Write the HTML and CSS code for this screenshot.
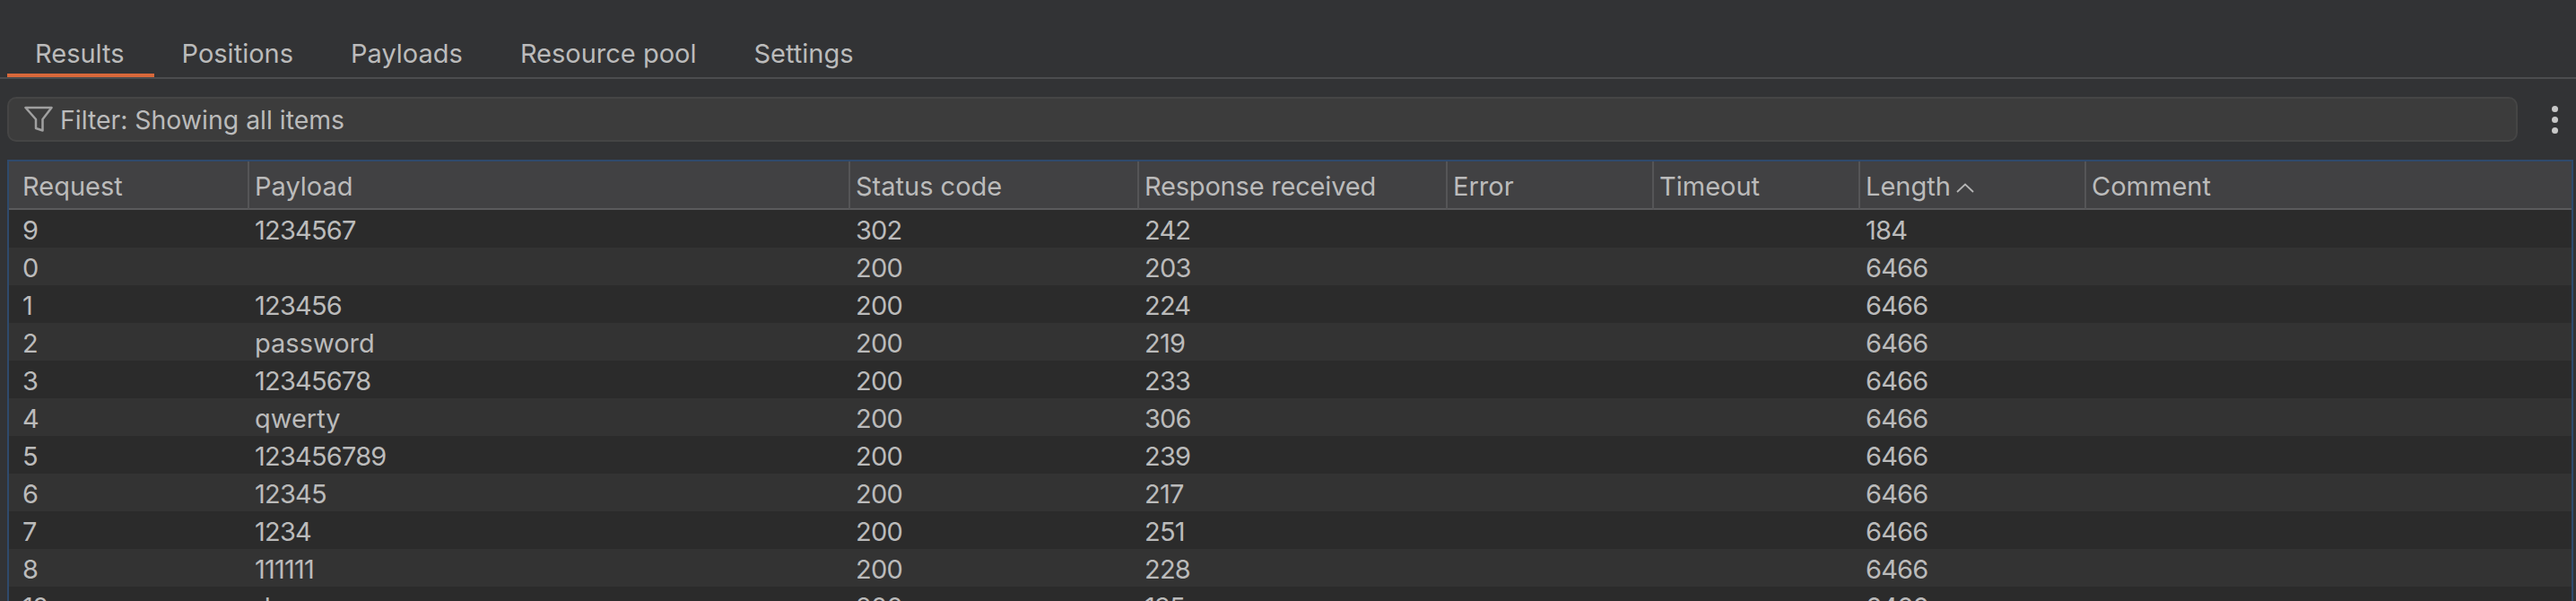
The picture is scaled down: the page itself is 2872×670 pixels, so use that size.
FILE: index.html
```html
<!DOCTYPE html>
<html lang="en">
<head>
    <meta charset="UTF-8">
    <title>Intruder results</title>
    <link rel="stylesheet" href="styles.css">
</head>
<body>
    <div class="tabs">
        <div class="tab active">Results</div>
        <div class="tab">Positions</div>
        <div class="tab">Payloads</div>
        <div class="tab">Resource pool</div>
        <div class="tab">Settings</div>
    </div>

    <div class="filter-row">
        <div class="filter">
            <svg class="funnel" width="32" height="30" viewBox="0 0 32 30" fill="none">
                <path d="M1.5 2 H30.5 L20.5 15 V27.5 L13 25 V15 Z" stroke="#a0a0a0" stroke-width="2.5" stroke-linejoin="round"/>
            </svg>
            <span>Filter: Showing all items</span>
        </div>
        <div class="more"><i></i><i></i><i></i></div>
    </div>

    <div class="table-wrap">
        <table>
            <colgroup>
                <col class="c-req"><col class="c-pay"><col class="c-status"><col class="c-resp">
                <col class="c-err"><col class="c-time"><col class="c-len"><col>
            </colgroup>
            <thead>
                <tr>
                    <th>Request</th>
                    <th>Payload</th>
                    <th>Status code</th>
                    <th class="tight">Response received</th>
                    <th>Error</th>
                    <th>Timeout</th>
                    <th>Length<svg class="sort" width="20" height="11" viewBox="0 0 20 11" fill="none"><path d="M1 10 L10 1.5 L19 10" stroke="#b5b5b5" stroke-width="1.8"/></svg></th>
                    <th>Comment</th>
                </tr>
            </thead>
            <tbody>
                <tr><td>9</td><td>1234567</td><td>302</td><td>242</td><td></td><td></td><td>184</td><td></td></tr>
                <tr><td>0</td><td></td><td>200</td><td>203</td><td></td><td></td><td>6466</td><td></td></tr>
                <tr><td>1</td><td>123456</td><td>200</td><td>224</td><td></td><td></td><td>6466</td><td></td></tr>
                <tr><td>2</td><td class="word">password</td><td>200</td><td>219</td><td></td><td></td><td>6466</td><td></td></tr>
                <tr><td>3</td><td>12345678</td><td>200</td><td>233</td><td></td><td></td><td>6466</td><td></td></tr>
                <tr><td>4</td><td class="word">qwerty</td><td>200</td><td>306</td><td></td><td></td><td>6466</td><td></td></tr>
                <tr><td>5</td><td>123456789</td><td>200</td><td>239</td><td></td><td></td><td>6466</td><td></td></tr>
                <tr><td>6</td><td>12345</td><td>200</td><td>217</td><td></td><td></td><td>6466</td><td></td></tr>
                <tr><td>7</td><td>1234</td><td>200</td><td>251</td><td></td><td></td><td>6466</td><td></td></tr>
                <tr><td>8</td><td>111111</td><td>200</td><td>228</td><td></td><td></td><td>6466</td><td></td></tr>
                <tr><td>10</td><td class="word">dragon</td><td>200</td><td>135</td><td></td><td></td><td>6466</td><td></td></tr>
            </tbody>
        </table>
    </div>
</body>
</html>
```

FILE: styles.css
```css
html, body {
    height: 670px;
    overflow: hidden;
}
body {
    margin: 0;
    background-color: #323335;
    color: #bbbbbb;
    font-family: Inter, "Liberation Sans", sans-serif;
    font-size: 29px;
}
.tabs {
    display: flex;
    height: 56px;
    padding: 30px 0 0 8px;
    border-bottom: 2px solid #4c4d4f;
}
.tab {
    padding: 14px 33px 0 31px;
    line-height: 32px;
}
.tab.active {
    border-bottom: 4px solid #d9683a;
    height: 38px;
}
.filter-row {
    display: flex;
    align-items: center;
    gap: 17px;
    padding: 20px 0 0 8px;
}
.filter {
    flex: 1;
    display: flex;
    align-items: center;
    gap: 8px;
    height: 50px;
    box-sizing: border-box;
    padding-left: 17px;
    font-size: 28.4px;
    background-color: #3c3c3c;
    border: 2px solid #454545;
    border-radius: 10px;
}
.more {
    width: 48px;
    display: flex;
    flex-direction: column;
    align-items: center;
    gap: 5px;
}
.more i {
    width: 7px;
    height: 7px;
    border-radius: 50%;
    background-color: #c8c8c8;
}
.table-wrap {
    margin: 20px 3px 0 8px;
    border: 2px solid #2f4a6c;
    border-bottom: none;
}
table {
    width: 100%;
    table-layout: fixed;
    border-collapse: separate;
    border-spacing: 0;
}
.c-req { width: 268px; }
.c-pay { width: 670px; }
.c-status { width: 322px; }
.c-resp { width: 344px; }
.c-err { width: 230px; }
.c-time { width: 230px; }
.c-len { width: 252px; }
th {
    box-sizing: border-box;
    height: 54px;
    padding: 2px 0 0 6px;
    text-align: left;
    font-weight: normal;
    background-color: #414143;
    border-right: 2px solid #555557;
    border-bottom: 2px solid #5a5a5c;
}
th.tight {
    letter-spacing: -0.2px;
}
th:first-child, td:first-child {
    padding-left: 15px;
}
th:last-child {
    border-right: none;
}
td {
    box-sizing: border-box;
    height: 42px;
    padding: 2px 0 0 6px;
    letter-spacing: -0.8px;
}
td.word {
    letter-spacing: 0;
}
tbody tr:nth-child(odd) {
    background-color: #2b2b2b;
}
tbody tr:nth-child(even) {
    background-color: #333333;
}
.sort {
    margin-left: 6px;
    vertical-align: 3px;
}
```
